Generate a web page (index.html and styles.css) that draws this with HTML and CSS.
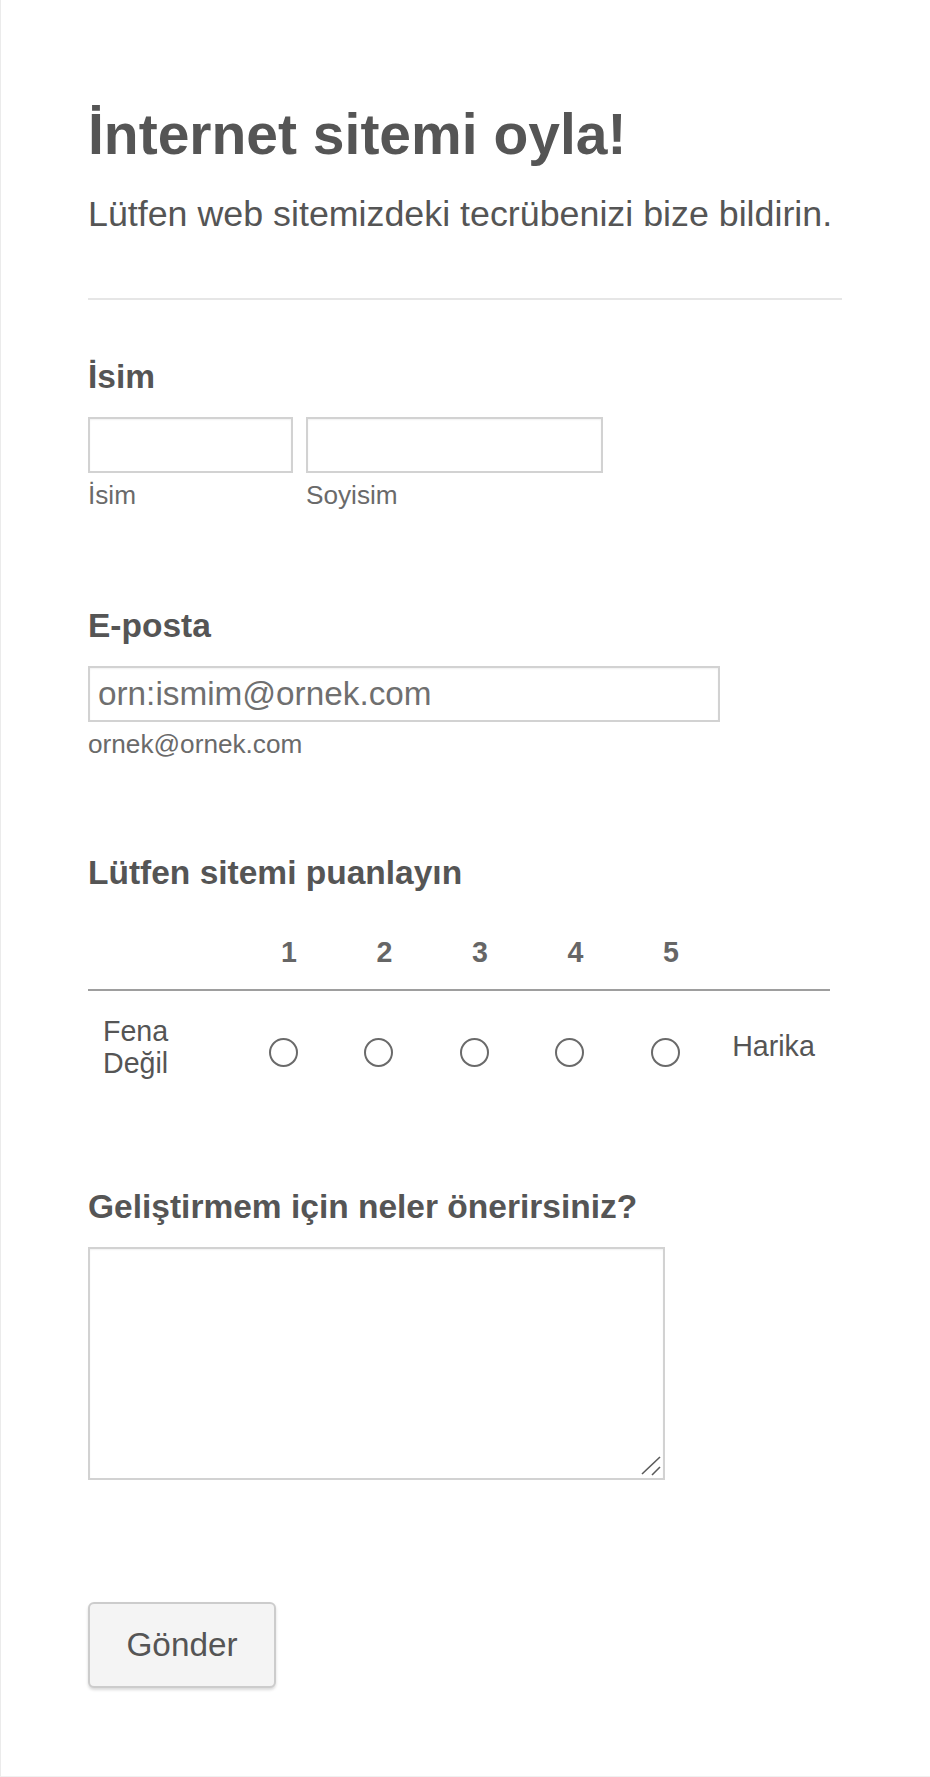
FILE: index.html
```html
<!DOCTYPE html>
<html lang="tr">
<head>
<meta charset="utf-8">
<title>İnternet sitemi oyla!</title>
<link rel="stylesheet" href="styles.css">
</head>
<body>
<div class="page">
  <form class="form">
    <header class="form-header">
      <h1 class="title">İnternet sitemi oyla!</h1>
      <p class="subtitle">Lütfen web sitemizdeki tecrübenizi bize bildirin.</p>
    </header>
    <div class="divider"></div>

    <div class="field field-first">
      <label class="label">İsim</label>
      <div class="name-row">
        <div class="name-part">
          <input class="input input-first" type="text">
          <span class="sublabel">İsim</span>
        </div>
        <div class="name-part">
          <input class="input input-last" type="text">
          <span class="sublabel">Soyisim</span>
        </div>
      </div>
    </div>

    <div class="field field-email">
      <label class="label">E-posta</label>
      <input class="input input-email" type="email" placeholder="orn:ismim@ornek.com">
      <span class="sublabel">ornek@ornek.com</span>
    </div>

    <div class="field field-matrix">
      <label class="label">Lütfen sitemi puanlayın</label>
      <table class="matrix">
        <colgroup>
          <col class="c-first"><col class="c-96"><col class="c-95"><col class="c-96"><col class="c-95"><col class="c-96"><col class="c-last">
        </colgroup>
        <thead>
          <tr>
            <th></th><th class="num">1</th><th class="num">2</th><th class="num">3</th><th class="num">4</th><th class="num">5</th><th></th>
          </tr>
        </thead>
        <tbody>
          <tr>
            <td class="low">Fena<br>Değil</td>
            <td class="opt"><input class="radio" type="radio" name="rate"></td>
            <td class="opt"><input class="radio" type="radio" name="rate"></td>
            <td class="opt"><input class="radio" type="radio" name="rate"></td>
            <td class="opt"><input class="radio" type="radio" name="rate"></td>
            <td class="opt"><input class="radio" type="radio" name="rate"></td>
            <td class="high">Harika</td>
          </tr>
        </tbody>
      </table>
    </div>

    <div class="field field-text">
      <label class="label">Geliştirmem için neler önerirsiniz?</label>
      <div class="textarea-wrap">
        <textarea class="textarea"></textarea>
        <svg class="grip" width="22" height="22" viewBox="0 0 22 22" aria-hidden="true">
          <line x1="2" y1="19" x2="20" y2="2" stroke="#5a5a5a" stroke-width="1.6"/>
          <line x1="12" y1="20" x2="20" y2="12" stroke="#5a5a5a" stroke-width="1.6"/>
        </svg>
      </div>
    </div>

    <div class="actions">
      <button class="submit" type="button">Gönder</button>
    </div>
  </form>
</div>
</body>
</html>
```

FILE: styles.css
```css
html, body {
  margin: 0;
  padding: 0;
  background: #ffffff;
}

body {
  font-family: "Liberation Sans", Arial, sans-serif;
  color: #555555;
}

.page {
  box-sizing: border-box;
  width: 930px;
  height: 1777px;
  border-left: 1px solid #ebebeb;
  border-bottom: 1px solid #f0f0f0;
  overflow: hidden;
}

.form {
  display: flex;
  flex-direction: column;
  align-items: flex-start;
  padding: 102px 0 0 87px;
  width: 754px;
}

.form-header {
  width: 100%;
}

.title {
  margin: 0;
  font-size: 57px;
  line-height: 64px;
  font-weight: bold;
  color: #555555;
}

.subtitle {
  margin: 26px 0 0;
  font-size: 35.8px;
  line-height: 44px;
  color: #555555;
}

.divider {
  margin-top: 62px;
  width: 754px;
  height: 2px;
  background: #e6e6e6;
}

.field {
  display: flex;
  flex-direction: column;
  align-items: flex-start;
}

.field-first { margin-top: 57px; }
.field-email { margin-top: 96px; }
.field-matrix { margin-top: 94px; }
.field-text { margin-top: 84px; }

.label {
  font-size: 33.5px;
  line-height: 40px;
  font-weight: bold;
  color: #555555;
}

.name-row {
  display: flex;
  gap: 13px;
  margin-top: 20px;
}

.name-part {
  display: flex;
  flex-direction: column;
  align-items: flex-start;
}

.input {
  box-sizing: border-box;
  height: 56px;
  margin: 0;
  padding: 0 8px;
  border: 2px solid #d2d2d2;
  border-radius: 0;
  background: #ffffff;
  box-shadow: inset 0 1px 2px rgba(0, 0, 0, 0.06);
  font-family: "Liberation Sans", Arial, sans-serif;
  font-size: 33.3px;
  color: #555555;
  outline: none;
}

.input::placeholder {
  color: #6f6f6f;
  opacity: 1;
}

.input-first { width: 205px; }
.input-last { width: 297px; }
.input-email { width: 632px; margin-top: 20px; }

.sublabel {
  margin-top: 7px;
  font-size: 26.2px;
  line-height: 30px;
  color: #6a6a6a;
}

.matrix {
  margin-top: 20px;
  width: 742px;
  table-layout: fixed;
  border-collapse: collapse;
  font-size: 28.6px;
  color: #555555;
}

.c-first { width: 147px; }
.c-96 { width: 96px; }
.c-95 { width: 95px; }
.c-last { width: 117px; }

.matrix th {
  padding: 24px 0 22px;
  line-height: 30px;
  border-bottom: 2px solid #9e9e9e;
  font-weight: bold;
  color: #666666;
}

.matrix th.num {
  padding-left: 12px;
  text-align: center;
}

.matrix td {
  padding: 24px 0;
  line-height: 32px;
  vertical-align: middle;
}

.matrix td.low {
  padding-left: 15px;
  text-align: left;
}

.matrix td.opt {
  text-align: center;
}

.matrix td.high {
  text-align: center;
  padding-left: 4px;
  padding-bottom: 26px;
}

.radio {
  appearance: none;
  -webkit-appearance: none;
  box-sizing: border-box;
  display: inline-block;
  width: 29px;
  height: 29px;
  margin: 10px 0 0;
  border: 2px solid #6a6a6a;
  border-radius: 50%;
  background: #ffffff;
  vertical-align: middle;
}

.textarea-wrap {
  position: relative;
  margin-top: 20px;
  width: 577px;
  height: 233px;
}

.textarea {
  display: block;
  box-sizing: border-box;
  width: 577px;
  height: 233px;
  margin: 0;
  padding: 8px;
  border: 2px solid #d2d2d2;
  border-radius: 0;
  background: #ffffff;
  box-shadow: inset 0 1px 2px rgba(0, 0, 0, 0.06);
  font-family: "Liberation Sans", Arial, sans-serif;
  font-size: 28px;
  color: #555555;
  resize: none;
  outline: none;
}

.grip {
  position: absolute;
  right: 3px;
  bottom: 3px;
}

.actions {
  margin-top: 122px;
}

.submit {
  box-sizing: border-box;
  width: 188px;
  height: 86px;
  padding: 0;
  border: 2px solid #cccccc;
  border-radius: 6px;
  background: #f4f4f4;
  box-shadow: 0 2px 3px rgba(0, 0, 0, 0.15);
  font-family: "Liberation Sans", Arial, sans-serif;
  font-size: 33.3px;
  color: #555555;
  cursor: pointer;
}
```
